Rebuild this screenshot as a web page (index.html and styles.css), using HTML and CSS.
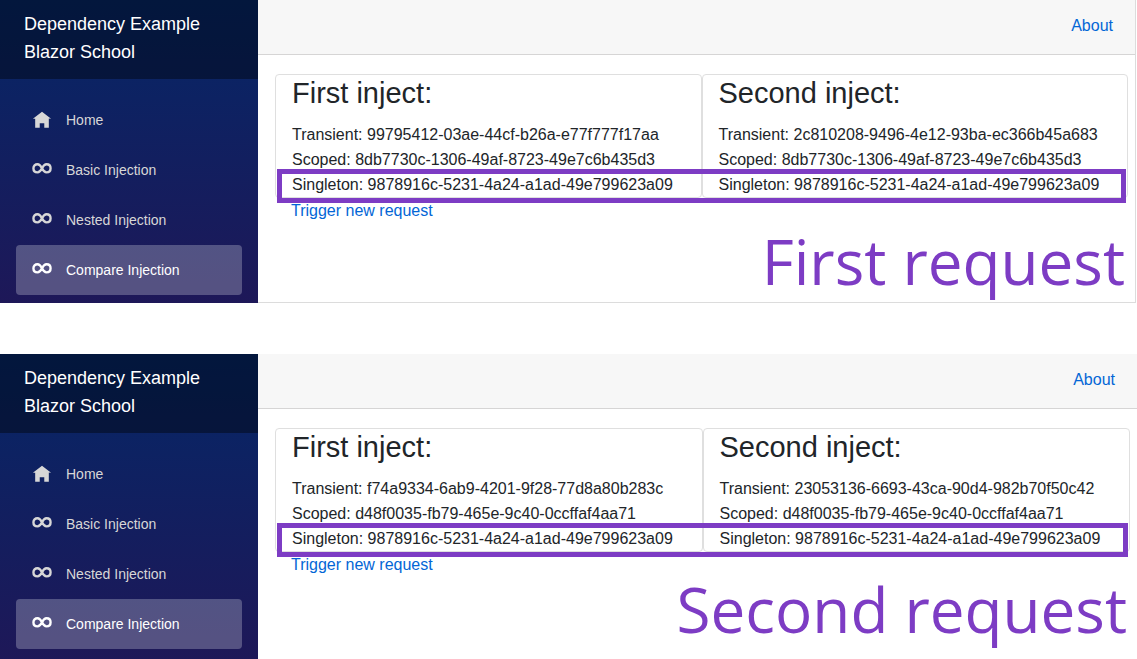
FILE: index.html
```html
<!DOCTYPE html>
<html lang="en">
<head>
<meta charset="utf-8">
<meta name="viewport" content="width=device-width, initial-scale=1">
<title>Dependency Example Blazor School</title>
<link rel="stylesheet" href="styles.css">
</head>
<body>
<svg class="sprite" aria-hidden="true">
  <symbol id="home" viewBox="-0.4 -0.8 8.8 8.8"><path d="M4 0l-4 3h1v4h2v-2h2v2h2v-4.03l1 .03-4-3z"/></symbol>
  <symbol id="infinity" viewBox="-0.2 -1.5 8.4 8.4"><path fill="none" stroke-width="1" d="M4 2C3.5 1 3 .3 2.1 .3C1.1 .3 .4 1 .4 2S1.1 3.7 2.1 3.7C3 3.7 3.5 3 4 2S5 .3 5.9 .3C6.9 .3 7.6 1 7.6 2S6.9 3.7 5.9 3.7C5 3.7 4.5 3 4 2z"/></symbol>
</svg>

<section class="shot shot-framed">
  <aside class="sidebar">
    <a class="brand" href="#">Dependency Example<br>Blazor School</a>
    <nav class="menu">
      <a class="menu-item" href="#"><svg class="icon"><use href="#home"/></svg>Home</a>
      <a class="menu-item" href="#"><svg class="icon icon-line"><use href="#infinity"/></svg>Basic Injection</a>
      <a class="menu-item" href="#"><svg class="icon icon-line"><use href="#infinity"/></svg>Nested Injection</a>
      <a class="menu-item active" href="#"><svg class="icon icon-line"><use href="#infinity"/></svg>Compare Injection</a>
    </nav>
  </aside>
  <div class="page">
    <header class="topbar"><a class="link" href="#">About</a></header>
    <main class="content">
      <div class="cards">
        <article class="card">
          <h2 class="card-title">First inject:</h2>
          <div>Transient: 99795412-03ae-44cf-b26a-e77f777f17aa</div>
          <div>Scoped: 8db7730c-1306-49af-8723-49e7c6b435d3</div>
          <div>Singleton: 9878916c-5231-4a24-a1ad-49e799623a09</div>
        </article>
        <article class="card">
          <h2 class="card-title">Second inject:</h2>
          <div>Transient: 2c810208-9496-4e12-93ba-ec366b45a683</div>
          <div>Scoped: 8db7730c-1306-49af-8723-49e7c6b435d3</div>
          <div>Singleton: 9878916c-5231-4a24-a1ad-49e799623a09</div>
        </article>
        <div class="highlight"></div>
      </div>
      <a class="link trigger" href="#">Trigger new request</a>
    </main>
    <p class="caption">First request</p>
  </div>
</section>

<section class="shot shot-last">
  <aside class="sidebar">
    <a class="brand" href="#">Dependency Example<br>Blazor School</a>
    <nav class="menu">
      <a class="menu-item" href="#"><svg class="icon"><use href="#home"/></svg>Home</a>
      <a class="menu-item" href="#"><svg class="icon icon-line"><use href="#infinity"/></svg>Basic Injection</a>
      <a class="menu-item" href="#"><svg class="icon icon-line"><use href="#infinity"/></svg>Nested Injection</a>
      <a class="menu-item active" href="#"><svg class="icon icon-line"><use href="#infinity"/></svg>Compare Injection</a>
    </nav>
  </aside>
  <div class="page">
    <header class="topbar"><a class="link" href="#">About</a></header>
    <main class="content">
      <div class="cards">
        <article class="card">
          <h2 class="card-title">First inject:</h2>
          <div>Transient: f74a9334-6ab9-4201-9f28-77d8a80b283c</div>
          <div>Scoped: d48f0035-fb79-465e-9c40-0ccffaf4aa71</div>
          <div>Singleton: 9878916c-5231-4a24-a1ad-49e799623a09</div>
        </article>
        <article class="card">
          <h2 class="card-title">Second inject:</h2>
          <div>Transient: 23053136-6693-43ca-90d4-982b70f50c42</div>
          <div>Scoped: d48f0035-fb79-465e-9c40-0ccffaf4aa71</div>
          <div>Singleton: 9878916c-5231-4a24-a1ad-49e799623a09</div>
        </article>
        <div class="highlight"></div>
      </div>
      <a class="link trigger" href="#">Trigger new request</a>
    </main>
    <p class="caption caption-high">Second request</p>
  </div>
</section>
</body>
</html>
```
FILE: styles.css
```css
* { box-sizing: border-box; }

body {
  margin: 0;
  min-height: 100vh;
  display: flex;
  flex-direction: column;
  gap: 51px;
  background: #fff;
  color: #212529;
  font: 16px/25px "Liberation Sans", Arial, sans-serif;
}

.sprite { display: none; }

.shot { display: flex; }
.shot-last { flex: 1; }
.shot-framed .page {
  margin-right: 1px;
  border-right: 1px solid #dcdcdc;
  border-bottom: 1px solid #dcdcdc;
}

.sidebar {
  flex: 0 0 258px;
  background: linear-gradient(180deg, #052767 0, #3a0647 650px);
}

.brand {
  display: block;
  padding: 10px 24px 13px;
  background: rgba(0, 0, 0, .4);
  color: #fff;
  font-size: 18px;
  line-height: 28px;
  text-decoration: none;
}

.menu { padding: 16px 16px 8px; }

.menu-item {
  display: flex;
  align-items: center;
  gap: 14px;
  height: 50px;
  padding: 0 16px;
  border-radius: 4px;
  color: #d7d7d7;
  font-size: 14px;
  text-decoration: none;
}
.menu-item.active {
  background: rgba(255, 255, 255, .25);
  color: #fff;
}

.icon {
  width: 20px;
  height: 20px;
  fill: currentColor;
}
.icon-line { stroke: currentColor; }

.page {
  flex: 1;
  min-width: 0;
  display: flex;
  flex-direction: column;
}

.topbar {
  display: flex;
  justify-content: flex-end;
  padding: 13px 22px 16px;
  background: #f7f7f7;
  border-bottom: 1px solid #d6d5d5;
}

.link { color: #0366d6; text-decoration: none; }

.content { padding: 19px 7px 0 17px; }

.cards {
  position: relative;
  display: grid;
  grid-template-columns: 1fr 1fr;
}

.card {
  padding: 0 16px;
  border: 1px solid #dfdfdf;
  border-radius: 4px;
}

.card-title {
  margin: 0 0 11px;
  font-size: 29px;
  font-weight: 400;
  line-height: 36px;
}

.highlight {
  position: absolute;
  left: 2px;
  right: 2px;
  bottom: -5px;
  height: 34px;
  border: 5px solid #7d3cc4;
}

.trigger { margin-left: 16px; }

.caption {
  margin: 0;
  padding-right: 10px;
  color: #7d3cc4;
  font: 62px/76px "Open Sans", "Noto Sans", sans-serif;
  text-align: right;
}
.caption-high { line-height: 64px; }
```
